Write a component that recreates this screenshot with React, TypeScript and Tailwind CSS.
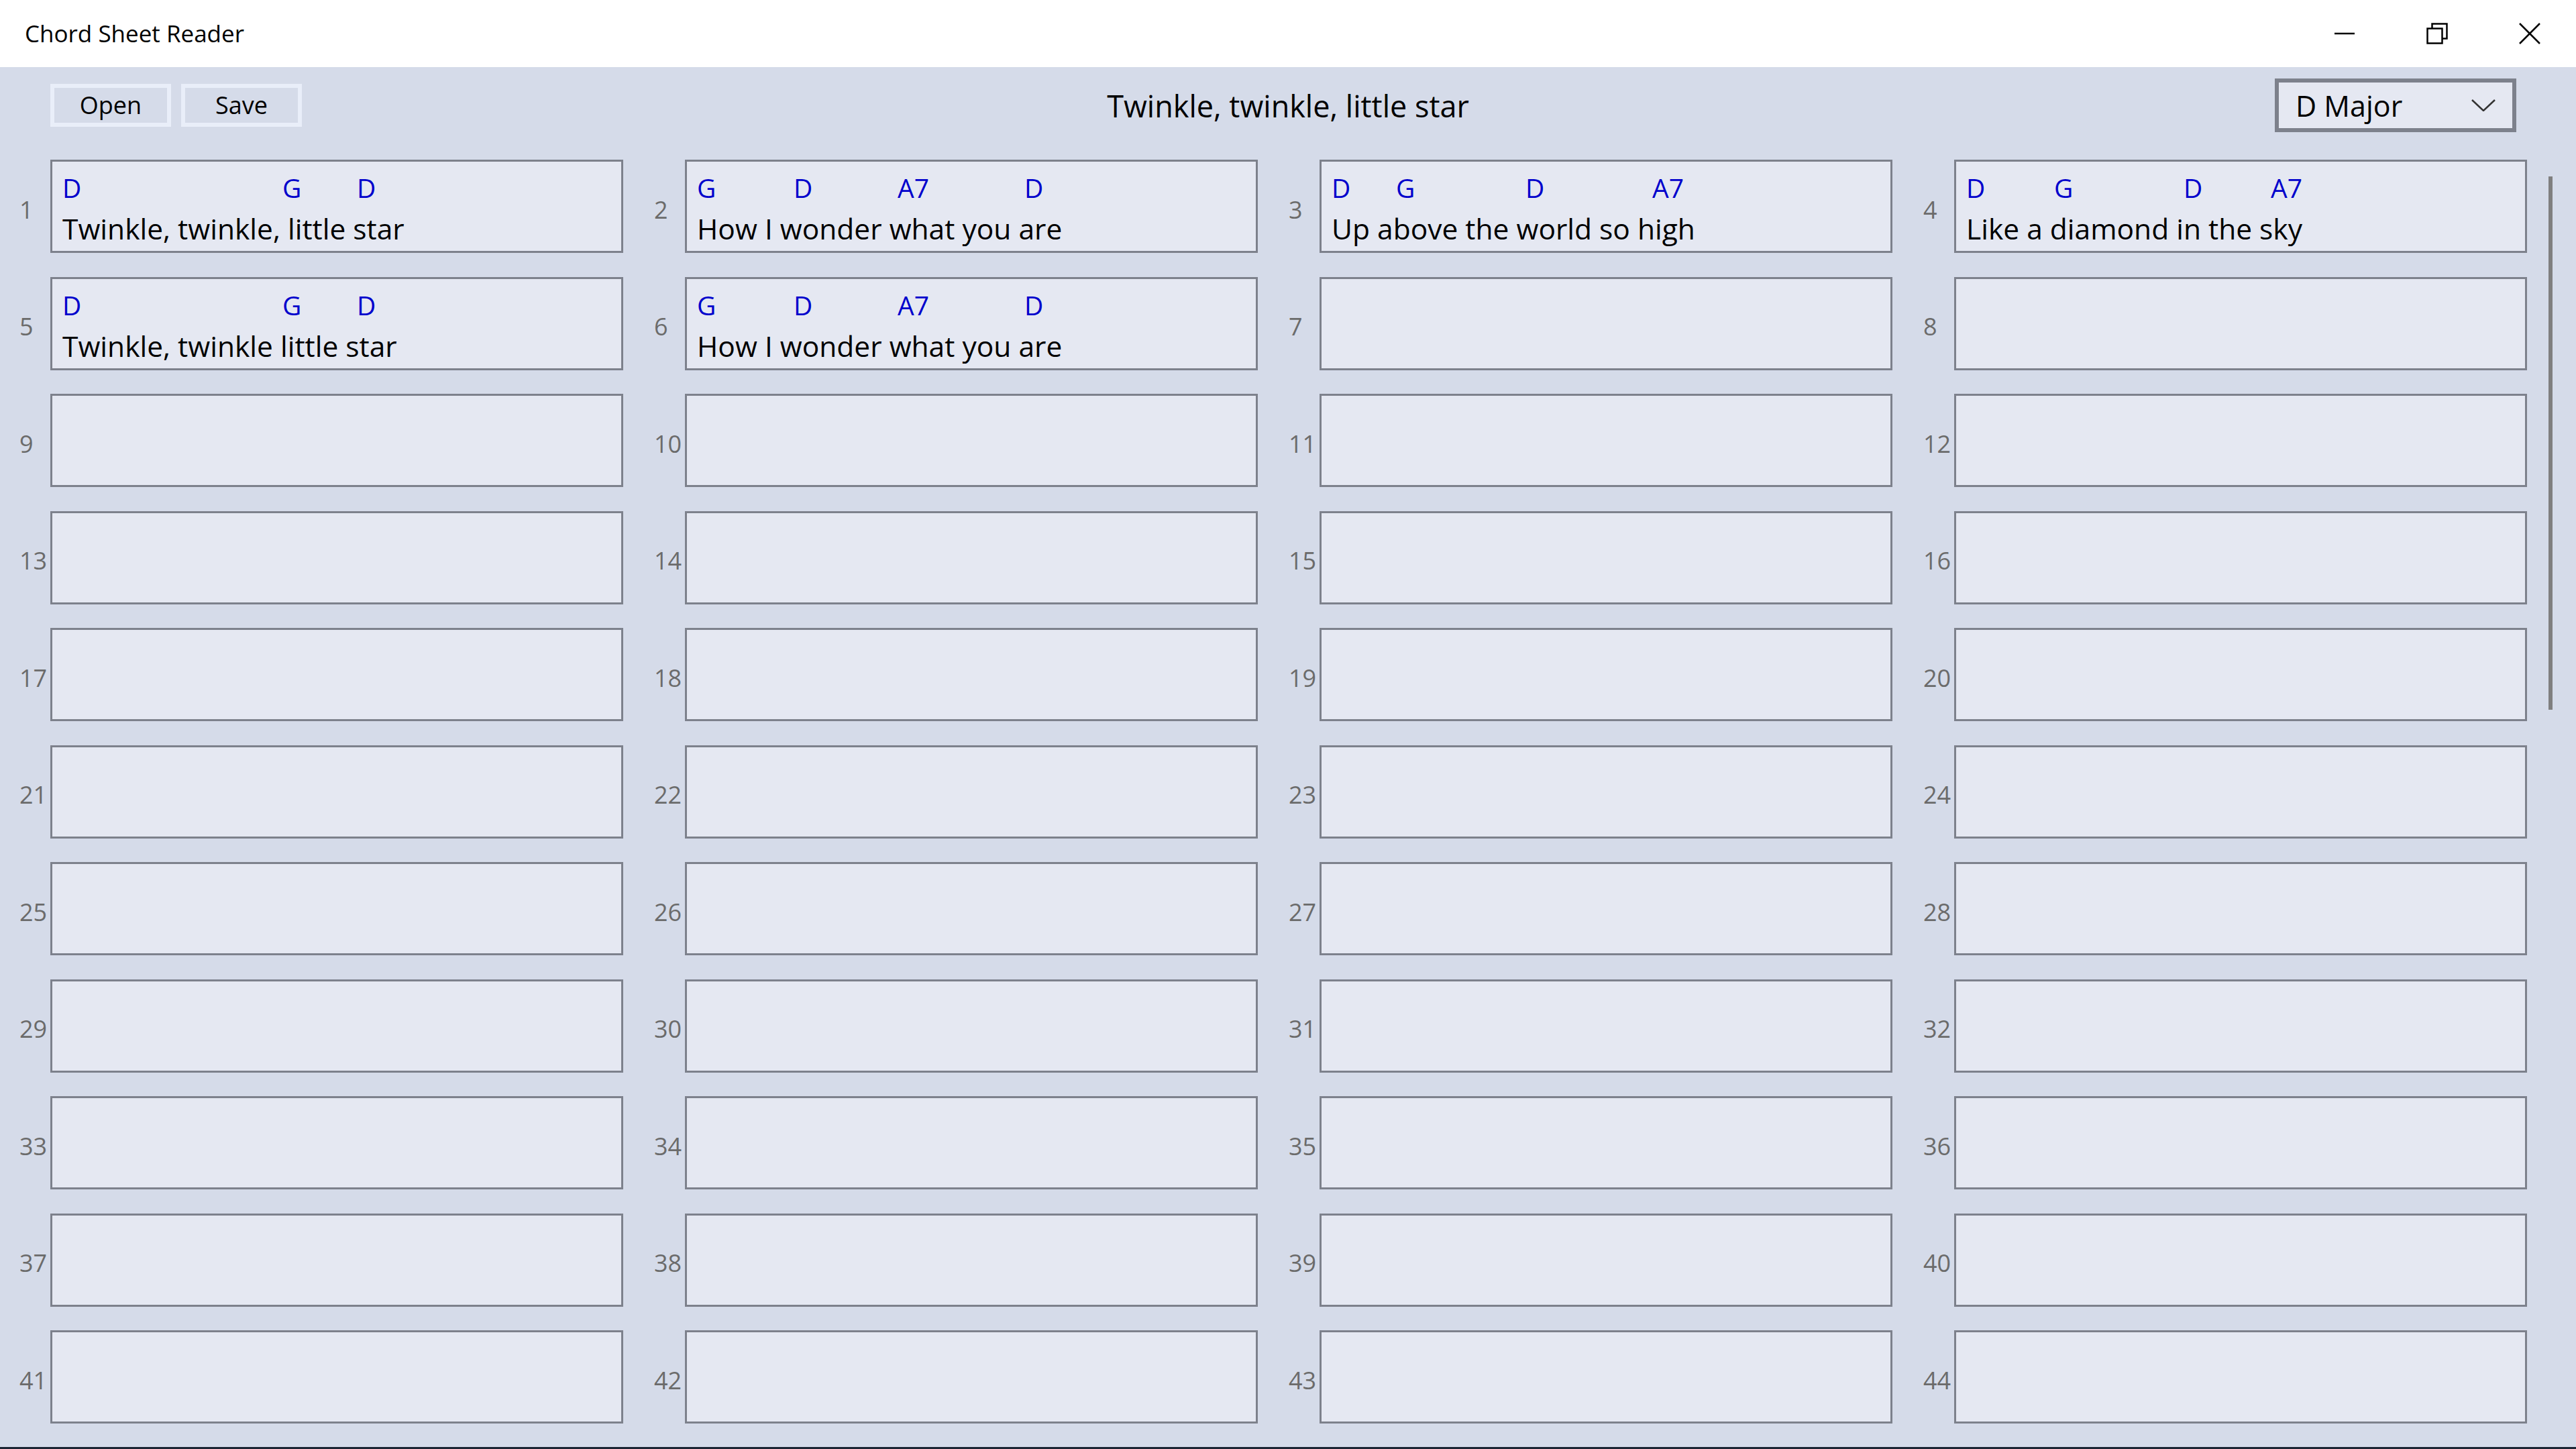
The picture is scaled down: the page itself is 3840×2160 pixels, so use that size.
import React from "react";

type Chord = [string, number];
type Line = { chords: Chord[]; lyric: string };

const LINES: Record<number, Line> = {
  1: { chords: [["D", 0], ["G", 328], ["D", 439]], lyric: "Twinkle, twinkle, little star" },
  2: { chords: [["G", 0], ["D", 144], ["A7", 299], ["D", 488]], lyric: "How I wonder what you are" },
  3: { chords: [["D", 0], ["G", 96], ["D", 289], ["A7", 478]], lyric: "Up above the world so high" },
  4: { chords: [["D", 0], ["G", 131], ["D", 324], ["A7", 454]], lyric: "Like a diamond in the sky" },
  5: { chords: [["D", 0], ["G", 328], ["D", 439]], lyric: "Twinkle, twinkle little star" },
  6: { chords: [["G", 0], ["D", 144], ["A7", 299], ["D", 488]], lyric: "How I wonder what you are" },
};

function Cell({ n }: { n: number }) {
  const line = LINES[n];
  return (
    <div className="flex items-center">
      <div className="w-[46px] pt-[10px] text-[36px] leading-none text-[#6b6b6b]">{n}</div>
      <div className="w-[854px] h-[139px] border-[3px] border-[#7d818c] bg-[#e5e8f2] pl-[15px] pt-[19px]">
        {line && (
          <>
            <div className="flex h-[40px] text-[39px] leading-[40px] text-[#0000cc] whitespace-nowrap">
              {line.chords.map(([c, x], i) => {
                const next = line.chords[i + 1];
                return (
                  <span key={i} className="shrink-0" style={next ? { width: next[1] - x } : undefined}>
                    {c}
                  </span>
                );
              })}
            </div>
            <div className="mt-[20px] text-[42.5px] leading-[42px] text-black whitespace-pre">{line.lyric}</div>
          </>
        )}
      </div>
    </div>
  );
}

export default function App() {
  const cells = Array.from({ length: 44 }, (_, i) => i + 1);
  return (
    <div className="w-[3840px] h-[2160px] bg-[#d5dbe9] flex flex-col overflow-hidden font-['Open_Sans',sans-serif]">
      <header className="h-[100px] shrink-0 bg-white flex items-center">
        <span className="pl-[37px] text-[35px] text-black">Chord Sheet Reader</span>
        <div className="ml-auto flex h-full">
          <div className="w-[138px] h-full flex items-center justify-center">
            <svg width="32" height="32" viewBox="0 0 32 32">
              <line x1="1" y1="16" x2="31" y2="16" stroke="#000" strokeWidth="2.5" />
            </svg>
          </div>
          <div className="w-[138px] h-full flex items-center justify-center">
            <svg width="32" height="32" viewBox="0 0 32 32" fill="none">
              <rect x="1.5" y="8.5" width="22" height="22" stroke="#000" strokeWidth="2.5" />
              <path d="M8.5 8.5 V1.5 H30.5 V23.5 H23.5" stroke="#000" strokeWidth="2.5" />
            </svg>
          </div>
          <div className="w-[138px] h-full flex items-center justify-center">
            <svg width="32" height="32" viewBox="0 0 32 32">
              <line x1="1" y1="1" x2="31" y2="31" stroke="#000" strokeWidth="2.5" />
              <line x1="31" y1="1" x2="1" y2="31" stroke="#000" strokeWidth="2.5" />
            </svg>
          </div>
        </div>
      </header>

      <main className="relative flex-1 flex flex-col overflow-hidden">
        <div className="grid grid-cols-[1fr_auto_1fr] items-center h-[97px] pt-[17px] shrink-0">
          <div className="flex gap-[15px] ml-[75px]">
            <button className="w-[180px] h-[64px] border-[6px] border-[#e9eef9] text-[36px] leading-none text-black">
              Open
            </button>
            <button className="w-[180px] h-[64px] border-[6px] border-[#e9eef9] text-[36px] leading-none text-black">
              Save
            </button>
          </div>
          <div className="text-[45px] leading-none text-black">Twinkle, twinkle, little star</div>
          <div className="justify-self-end mr-[89px]">
            <div className="w-[360px] h-[80px] border-[6px] border-[#7d818c] bg-[#e5e8f2] flex items-center justify-between pl-[25px] pr-[25px]">
              <span className="text-[43px] leading-none text-black">D Major</span>
              <svg width="36" height="18" viewBox="0 0 36 18" fill="none">
                <polyline points="1,1 18,17 35,1" stroke="#333" strokeWidth="2.5" />
              </svg>
            </div>
          </div>
        </div>

        <div className="grid grid-cols-[repeat(4,900px)] gap-x-[46px] gap-y-[35.5px] pl-[29px] mt-[41px]">
          {cells.map((n) => (
            <Cell key={n} n={n} />
          ))}
        </div>

        <div className="absolute right-[35px] top-[163px] w-[6px] h-[795px] bg-[#7f7f7f]" />
      </main>
      <div className="h-[3px] shrink-0 bg-[#1b2433]" />
    </div>
  );
}
